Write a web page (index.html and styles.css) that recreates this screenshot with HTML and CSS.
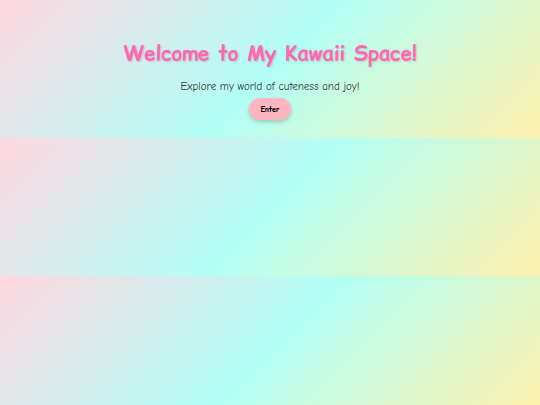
FILE: index.html
```html
<!DOCTYPE html>
<html>
<head>
<meta charset="utf-8">
<link rel="stylesheet" href="styles.css">
</head>
<body>
<div class="hero">
  <h1 class="title">Welcome to My Kawaii Space!</h1>
  <p class="subtitle">Explore my world of cuteness and joy!</p>
  <button class="enter">Enter</button>
</div>
</body>
</html>
```
FILE: styles.css
```css
body {
  margin: 0;
  padding: 0 0 18px;
  font-family: "Comic Relief", "Comic Neue", cursive;
  background: linear-gradient(135deg, #ffd6e0 0%, #b2fff6 50%, #fff1ad 100%);
}
.hero {
  text-align: center;
  padding-top: 39px;
}
.title {
  margin: 0;
  font-size: 20.3px;
  line-height: 30px;
  color: #ff69b4;
  text-shadow: 1px 1px 2px rgba(0,0,0,0.15);
}
.subtitle {
  margin: 10px 0 0;
  font-family: "Comic Neue", "Comic Relief", cursive;
  font-size: 11px;
  line-height: 16px;
  color: #3a3a3a;
}
.enter {
  display: block;
  margin: 3px auto 0;
  font-family: "Comic Relief", cursive;
  font-size: 7px;
  font-weight: bold;
  color: #000;
  background: #ffb6c1;
  border: none;
  border-radius: 11px;
  width: 42px;
  height: 22px;
  padding: 0;
  box-shadow: 0 2px 4px rgba(0,0,0,0.2);
}
```
